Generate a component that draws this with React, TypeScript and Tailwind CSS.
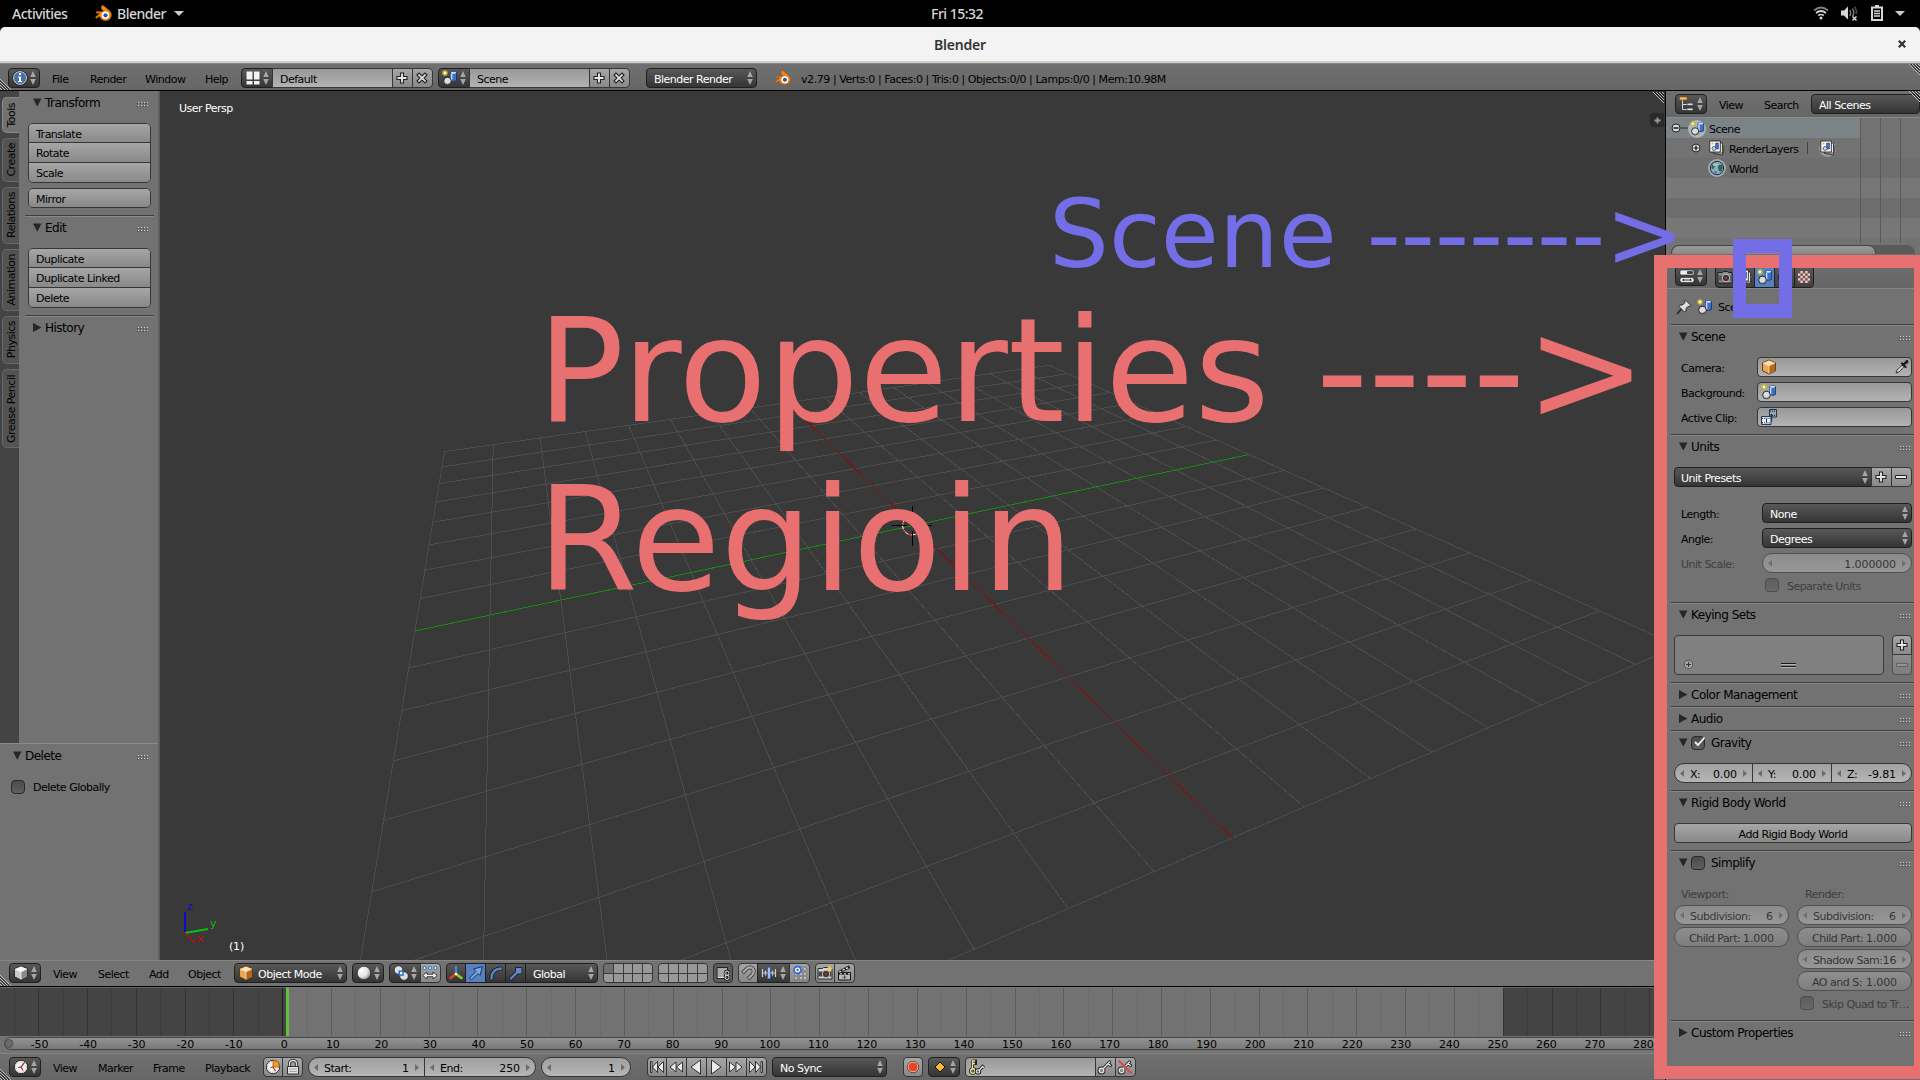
import React from "react";

type Kids = { children?: React.ReactNode };

/* ---------- shared class strings ---------- */
const DARK = "bg-gradient-to-b from-[#585858] to-[#353535] border border-[#1f1f1f] text-white";
const LIGHT = "bg-gradient-to-b from-[#a6a6a6] to-[#898989] border border-[#363636] text-black";
const FIELD = "bg-gradient-to-b from-[#999999] to-[#b3b3b3] border border-[#363636] text-black";
const NUM = "bg-gradient-to-b from-[#a0a0a0] to-[#b6b6b6] border border-[#363636] text-black";
const HEADER = "bg-gradient-to-b from-[#707070] to-[#666666]";

/* ---------- small drawings ---------- */
function UpDown({ className = "" }: { className?: string }) {
  return (
    <svg className={"shrink-0 " + className} width="6" height="14" viewBox="0 0 6 14">
      <path d="M3 0L5.8 6H.2zM3 14L5.8 8H.2z" fill="#a6a6a6" />
    </svg>
  );
}
function Tri({ open = true }: { open?: boolean }) {
  return (
    <svg className="shrink-0" width="9" height="9" viewBox="0 0 9 9">
      <path d={open ? "M0 .5H8.500L4.250 8.800z" : "M0 0L8.500 4.500L0 9z"} fill="#262626" />
    </svg>
  );
}
function Grip() {
  return (
    <svg className="shrink-0" width="11" height="5" viewBox="0 0 11 5" shapeRendering="crispEdges">
      {[0, 3, 6, 9].map((x) => (
        <g key={x}>
          <path d={`M${x} 1h1v1h-1zM${x} 4h1v1h-1z`} fill="#4a4a4a" />
          <path d={`M${x + 1} 0h1v1h-1zM${x + 1} 3h1v1h-1z`} fill="#d0d0d0" />
        </g>
      ))}
    </svg>
  );
}
function Corner({ flip = false }: { flip?: boolean }) {
  return (
    <svg width="12" height="12" viewBox="0 0 12 12" className={flip ? "rotate-180" : ""}>
      <path d="M0 1L11 12M0 4L8 12M0 7L5 12M0 10L2 12" stroke="#c4c4c4" strokeWidth="1" />
      <path d="M0 2.5L9.500 12M0 5.500L6.500 12M0 8.500L3.500 12" stroke="#111" strokeWidth="1" />
    </svg>
  );
}
function Svg({ children, s = 16 }: Kids & { s?: number }) {
  return (
    <svg className="shrink-0" width={s} height={s} viewBox="0 0 16 16" fill="none">
      {children}
    </svg>
  );
}
const Logo = ({ s = 16 }: { s?: number }) => (
  <Svg s={s}>
    <path d="M6 .8L7.800 .5L13.500 5.200Q16 7.400 15.500 10Q14.400 14.500 9.700 14.800Q5.200 14.500 4.300 10.700L1.200 12.600Q.2 12.400 .5 11.400L4.700 7.800H1.400Q.6 7 1.500 6.200H8.200L5.800 3.200z" fill="#f08518" stroke="#a04a08" strokeWidth=".5" />
    <circle cx="9.800" cy="9.700" r="3.500" fill="#fff" />
    <circle cx="9.900" cy="9.700" r="2" fill="#24579f" />
  </Svg>
);
const Plus = () => (
  <Svg>
    <path d="M6.500 3h3v3.500H13v3H9.500V13h-3V9.500H3v-3h3.500z" fill="#e6e6e6" stroke="#222" strokeWidth="1.100" />
  </Svg>
);
const Minus = ({ dim = false }: { dim?: boolean }) => (
  <Svg>
    <path d="M2.500 6.500h11v3h-11z" fill={dim ? "#b4b4b4" : "#e6e6e6"} stroke={dim ? "#555" : "#222"} />
  </Svg>
);
const Cross = () => (
  <Svg>
    <path d="M3 5L5 3L8 6L11 3L13 5L10 8L13 11L11 13L8 10L5 13L3 11L6 8z" fill="#e6e6e6" stroke="#222" strokeWidth="1.100" />
  </Svg>
);
const InfoIcon = () => (
  <Svg>
    <circle cx="8" cy="8" r="6.500" fill="#4a6fa8" stroke="#e8e8e8" strokeWidth="1" />
    <circle cx="8" cy="8" r="7.300" stroke="#151515" strokeWidth=".6" />
    <path d="M7 3h2v2H7zM6 6.500h3V11h1v1H6v-1h1V7.500H6z" fill="#fff" />
  </Svg>
);
const LayoutIcon = () => (
  <Svg>
    <path d="M1.500 1.500h6v8h-6zM1.500 11h6v3.500h-6zM9 1.500h5.500v8H9zM9 11h5.500v3.500H9z" fill="#f2f2f2" />
  </Svg>
);
const SceneShapes = () => (
  <>
    <path d="M8.500 2.600Q11.500 .6 14.500 2.600V10.500Q11.500 12.500 8.500 10.500z" fill="#3c73c8" stroke="#15315f" strokeWidth=".8" />
    <path d="M9.500 3.500v7" stroke="#c5dbff" strokeWidth="1.600" />
    <ellipse cx="11.500" cy="2.700" rx="2.600" ry="1" fill="#d4e3fa" />
    <circle cx="5.500" cy="11" r="3.800" fill="#ddd" stroke="#1a1a1a" strokeWidth=".9" />
    <path d="M2.500 12.500Q6 15.500 8.800 11.500Q8.500 14.500 5.500 14.500Q3.200 14.300 2.500 12.500" fill="#777" />
    <circle cx="3" cy="3" r="1.900" fill="#fffde0" stroke="#c9c13c" strokeWidth="1.500" />
  </>
);
const SceneIcon = ({ s = 16 }: { s?: number }) => (
  <Svg s={s}>
    <SceneShapes />
  </Svg>
);
const LayersIcon = () => (
  <Svg>
    <path d="M6 5l9 1.500L13.500 15L5 13.500z" fill="#d8d4c0" stroke="#222" strokeWidth=".8" />
    <path d="M4.500 3h9v10h-9z" fill="#e9e9e0" stroke="#222" strokeWidth=".8" />
    <path d="M.8 1h10.500v11H.8z" fill="#fff" stroke="#222" strokeWidth=".9" />
    <path d="M6.500 3h3v6h-3z" fill="#3c73c8" stroke="#15315f" strokeWidth=".5" />
    <circle cx="5" cy="8.500" r="2" fill="#ccd6e4" stroke="#15315f" strokeWidth=".7" />
    <path d="M2.500 2.500h2v2h-2z" fill="#e8b93c" />
  </Svg>
);
const WorldIcon = () => (
  <Svg>
    <circle cx="8" cy="8" r="6.700" fill="#83acd0" stroke="#1c2b3c" strokeWidth="1" />
    <path d="M2.500 5Q5 1.500 8 3L7 6L5 7L4.500 9.500L2.500 8zM9.500 5L13 4.500L14 8L12 12L10 11L9 8zM5 11L7.500 11.500L7 14z" fill="#35683a" />
    <ellipse cx="6" cy="4.500" rx="2.500" ry="1.500" fill="#fff" opacity=".6" />
  </Svg>
);
const TreeIcon = () => (
  <Svg>
    <path d="M3.500 4v9.500H8M3.500 8.500H8" stroke="#d8d8d8" strokeWidth="1" />
    <path d="M.5 1h7.500v3H.5z" fill="#f8c070" stroke="#8b4d0a" strokeWidth=".7" />
    <path d="M8 7.200h6v2H8zM8 12.300h6v2H8z" fill="#fff" stroke="#222" strokeWidth=".5" />
  </Svg>
);
const PropsIcon = () => (
  <Svg>
    <rect x="1" y="2" width="14" height="5" rx="1.500" fill="#eee" stroke="#222" strokeWidth=".6" />
    <rect x="8" y="3" width="6" height="3" rx="1" fill="#444" />
    <rect x="1" y="9.500" width="14" height="5" rx="2" fill="#eee" stroke="#222" strokeWidth=".6" />
    <path d="M5 10.500L3 12l2 1.500zM11 10.500l2 1.500l-2 1.500zM5 11.500h6v1H5z" fill="#333" />
  </Svg>
);
const CameraIcon = ({ star = false }: { star?: boolean }) => (
  <Svg>
    <path d="M1 3.500h4.500L6.500 2.500h4l1 1h3.500v10.500H1z" fill={star ? "#d4d4d4" : "#8d8d8d"} stroke="#1c1c1c" strokeWidth=".9" />
    <path d="M1.500 6.500h13v5h-13z" fill={star ? "#444" : "#5a5a5a"} />
    <circle cx="9" cy="9" r="3.700" fill="#333" stroke="#d0d0d0" strokeWidth=".9" />
    <circle cx="9" cy="9" r="1.500" fill="#9b3232" />
    {star && <path d="M12.500 0l1 2.500L16 3.500l-2.500 1l-1 2.500l-1-2.500L9 3.500l2.500-1z" fill="#f6cf3d" />}
  </Svg>
);
const TextureIcon = () => (
  <Svg>
    <path d="M2 2h12v12H2z" fill="#d9d4cf" />
    {[0, 1, 2, 3, 4].map((r) =>
      [0, 1, 2, 3, 4].map((c) =>
        (r + c) % 2 === 0 ? <rect key={`${r}${c}`} x={2 + c * 2.4} y={2 + r * 2.4} width="2.400" height="2.400" fill="#7e4540" /> : null
      )
    )}
  </Svg>
);
const PinIcon = () => (
  <Svg>
    <path d="M1 15L6 9.500" stroke="#222" strokeWidth="1.500" />
    <path d="M9.500 1L15 6.500L13.500 7.500L12.500 7L10 9.500V12L8.500 13L3 7.500L4 6H6.500L9 3.500L8.500 2z" fill="#e0e0e0" stroke="#1c1c1c" strokeWidth=".9" />
  </Svg>
);
const Cube = ({ orange = false }: { orange?: boolean }) => (
  <Svg>
    <path d="M8 1L14.500 3.800V11.800L8 15L1.500 11.800V3.800z" fill={orange ? "#eda654" : "#c9c9c9"} stroke={orange ? "#5b3208" : "#222"} strokeWidth=".9" />
    <path d="M8 1.500L14 4L8 6.800L2 4z" fill={orange ? "#fce0b4" : "#f6f6f6"} />
    <path d="M8 6.800L14 4V11.500L8 14.500z" fill={orange ? "#b06a20" : "#888"} />
    <path d="M2 4L8 6.800V14.500M8 6.800L14 4" stroke={orange ? "#fde8c8" : "#fff"} strokeWidth=".7" />
  </Svg>
);
const Dropper = () => (
  <Svg>
    <path d="M2 14L3 11L9 5.500L10.500 7L5 13z" fill="#ddd" stroke="#222" strokeWidth=".9" />
    <path d="M8 4.500L11.500 8M9 6L13 2" stroke="#1a1a1a" strokeWidth="2.200" strokeLinecap="round" />
    <path d="M10.500 4L12.500 1.500Q14.500 1 14.500 3.500L12 5.500z" fill="#222" />
  </Svg>
);
const ClipIcon = () => (
  <Svg>
    <path d="M8.500 .5H15.500V8H10.500V5L8.500 7z" fill="#8fa9bd" stroke="#182c3f" strokeWidth=".9" />
    <path d="M9 2.200h6M11 6.300h4" stroke="#182c3f" strokeDasharray="1 1" strokeWidth="1.200" />
    <path d="M10 7Q12 8 10 13" stroke="#182c3f" strokeWidth="1" />
    <path d="M.5 7.500h9.500v8H.5z" fill="#e4effa" stroke="#182c3f" strokeWidth=".9" />
    <path d="M1 9.300h9M1 13.800h9" stroke="#182c3f" strokeDasharray="1 1.200" strokeWidth="1.200" />
    <path d="M5.500 10v3.500" stroke="#182c3f" />
  </Svg>
);
const Sphere = () => (
  <Svg>
    <defs>
      <radialGradient id="ball" cx=".35" cy=".35" r=".7">
        <stop offset="0" stopColor="#fff" />
        <stop offset=".6" stopColor="#e4e4e4" />
        <stop offset="1" stopColor="#8a8a8a" />
      </radialGradient>
    </defs>
    <circle cx="8" cy="8" r="6.700" fill="url(#ball)" stroke="#222" strokeWidth=".6" />
  </Svg>
);
const PivotIcon = () => (
  <Svg>
    <circle cx="5.500" cy="5" r="4.300" fill="#e4e4e4" stroke="#222" strokeWidth=".8" />
    <circle cx="11" cy="11" r="4.300" fill="#dcdcdc" stroke="#222" strokeWidth=".8" />
    <rect x="6.200" y="6.200" width="3.800" height="3.800" fill="#fff" stroke="#2a6bd0" strokeWidth="1.500" />
  </Svg>
);
const AlignIcon = () => (
  <Svg>
    {[2.5, 8, 13.5].map((x) => (
      <circle key={x} cx={x} cy="3" r="1.500" fill="#fff" stroke="#3c73c8" strokeWidth="1.200" />
    ))}
    <path d="M.8 10.500L5 7v2.300h6V7l4.200 3.500L11 14v-2.300H5V14z" fill="#f2f2f2" stroke="#222" strokeWidth=".8" />
  </Svg>
);
const AxisIcon = () => (
  <Svg>
    <path d="M8 9V2" stroke="#4d7fe0" strokeWidth="2.400" strokeLinecap="round" />
    <path d="M8 9L2.500 13" stroke="#e8432c" strokeWidth="2.600" strokeLinecap="round" />
    <path d="M8 9L13.500 13" stroke="#8fd21c" strokeWidth="2.600" strokeLinecap="round" />
    <circle cx="8" cy="9" r="1.200" fill="#fff" />
  </Svg>
);
const ArrowIcon = () => (
  <Svg>
    <path d="M1.500 13L8 6.500L5.500 4L14.500 1.500L12 10.500L10 8.500L3.500 15z" fill="#7da7e4" stroke="#16305c" strokeWidth="1" />
  </Svg>
);
const ArcIcon = () => (
  <Svg>
    <path d="M3.500 13.500Q3.500 4 13 3.500" stroke="#15243c" strokeWidth="4" strokeLinecap="round" />
    <path d="M3.500 13.500Q3.500 4 13 3.500" stroke="#5f83bd" strokeWidth="2.300" strokeLinecap="round" />
  </Svg>
);
const ScaleIcon = () => (
  <Svg>
    <path d="M3 13.500L9 7.500" stroke="#15243c" strokeWidth="4" strokeLinecap="round" />
    <path d="M7.500 2.500H14V9H7.500z" fill="#6488c0" stroke="#15243c" />
    <path d="M3 13.500L9.500 7" stroke="#6488c0" strokeWidth="2.300" strokeLinecap="round" />
  </Svg>
);
const LockLayer = () => (
  <Svg>
    <path d="M2 2.500h10.500v11H2z" fill="#a8a8a8" stroke="#222" />
    <path d="M3 12.500h7" stroke="#e0e0e0" />
    <rect x="10" y="6" width="4" height="4.500" rx="2" stroke="#222" strokeWidth="2.400" />
    <rect x="10" y="10" width="4" height="4.500" rx="2" stroke="#222" strokeWidth="2.400" />
    <rect x="10" y="6" width="4" height="4.500" rx="2" stroke="#ddd" strokeWidth="1" />
    <rect x="10" y="10" width="4" height="4.500" rx="2" stroke="#ddd" strokeWidth="1" />
  </Svg>
);
const Magnet = () => (
  <Svg>
    <path d="M2.500 8L7 3.500Q11 1 13 4T12 10L8 14" stroke="#444" strokeWidth="4" />
    <path d="M3 7.500L7 3.500Q11 1 13 4T12 10L8.500 13.500" stroke="#a9a9a9" strokeWidth="2.200" />
  </Svg>
);
const SnapIcon = () => (
  <Svg>
    <path d="M1.500 4v8M4.500 5.500v5M11.500 5.500v5M14.500 4v8M1 8h14" stroke="#ccc" strokeWidth="1.200" />
    <path d="M8 2v12" stroke="#3d7fe0" strokeWidth="3" />
    <path d="M8 3v10" stroke="#fff" strokeWidth="1" />
  </Svg>
);
const SnapGrid = () => (
  <Svg>
    <path d="M4 8v8M9 1v15M13 1v15M2 9h14M2 13h14M9 4h7" stroke="#222" strokeWidth="2.200" />
    <path d="M4 8v8M9 1v15M13 1v15M2 9h14M2 13h14M9 4h7" stroke="#eee" strokeWidth="1" />
    <circle cx="5.500" cy="5" r="3.500" fill="#fff" stroke="#2f6fd6" strokeWidth="1.800" />
    <circle cx="5.500" cy="5" r="1.200" fill="#2f6fd6" />
  </Svg>
);
const ClapIcon = () => (
  <Svg>
    <path d="M2.500 7.500h12V15h-12z" fill="#bbb" stroke="#111" />
    <path d="M2.500 7.500h12v2.300h-12z" fill="#222" />
    <path d="M4 8.800h2M8 8.800h2M12 8.800h2" stroke="#eee" />
    <path d="M2 6.500L13 .8L14 3L3 8z" fill="#eee" stroke="#111" strokeWidth=".8" />
    <path d="M5 5l1.500 1.300M8.500 3.300L10 4.700M12 1.500l1 1.500" stroke="#111" strokeWidth="1.500" />
    <path d="M8.500 10.500v3.500M6.500 12.200h4" stroke="#555" />
  </Svg>
);
const ClockIcon = ({ pie = false }: { pie?: boolean }) => (
  <Svg>
    <circle cx="8" cy="8" r="6.700" fill="#f2f2f2" stroke="#222" strokeWidth=".9" />
    <circle cx="8" cy="8" r="5.300" stroke="#999" strokeWidth="1" strokeDasharray="1 1.800" />
    {pie && <path d="M8 8V1.300Q14.700 1.500 14.700 8z" fill="#f59b1e" stroke="#7a4a08" strokeWidth=".6" />}
    <path d={pie ? "M8 8L10.500 12M8 8L5.500 8.500" : "M8 8L11.500 3.500"} stroke={pie ? "#c22" : "#333"} strokeWidth="1.200" />
    {!pie && <path d="M8 8L5 8.500M8 8L10 11.500" stroke="#c22" strokeWidth="1.200" />}
  </Svg>
);
const Padlock = () => (
  <Svg>
    <path d="M4.500 8V5Q4.500 1.500 8 1.500T11.500 5V8" stroke="#222" strokeWidth="3" />
    <path d="M4.500 8V5Q4.500 1.500 8 1.500T11.500 5V8" stroke="#ddd" strokeWidth="1.400" />
    <path d="M2.500 7.500h11V15h-11z" fill="#e2e2e2" stroke="#222" strokeWidth=".9" />
    <path d="M4 10h8M4 12.500h8" stroke="#999" strokeWidth=".8" />
  </Svg>
);
const Transport = ({ d }: { d: string }) => (
  <Svg>
    <path d={d} fill="#ececec" stroke="#222" strokeWidth=".9" strokeLinejoin="round" />
  </Svg>
);
const Key = ({ del = false }: { del?: boolean }) => (
  <Svg>
    <path d="M5 11L12.500 3M11 4.500l2.500 2" stroke="#222" strokeWidth="3.200" strokeLinecap="round" />
    <circle cx="4.500" cy="11.500" r="2.400" stroke="#222" strokeWidth="3" />
    <path d="M5.500 10.500L12.500 3M11 4.500l2.300 2" stroke="#e4e4e4" strokeWidth="1.400" strokeLinecap="round" />
    <circle cx="4.500" cy="11.500" r="2.300" fill="#888" stroke="#e4e4e4" strokeWidth="1.300" />
    {del && <path d="M1.500 1.500L14.500 14.500" stroke="#e04848" strokeWidth="2" />}
  </Svg>
);
const KeySet = () => (
  <Svg>
    <path d="M3.500 1.500v9M3.500 2h3v2.500h-3" stroke="#222" strokeWidth="3" />
    <circle cx="3.800" cy="12" r="2.300" stroke="#222" strokeWidth="3" />
    <path d="M3.500 1.500v9M3 2h3.200M3 4.500h3" stroke="#e8e29a" strokeWidth="1.400" />
    <circle cx="3.800" cy="12" r="2.200" stroke="#e8e29a" strokeWidth="1.400" />
    <path d="M9.500 12L13.500 7.500l1.500 1.500" stroke="#222" strokeWidth="3.200" />
    <circle cx="9" cy="12.500" r="1.800" stroke="#222" strokeWidth="2.800" />
    <path d="M9.500 12L13.500 7.500l1.500 1.500" stroke="#ddd" strokeWidth="1.400" />
    <circle cx="9" cy="12.500" r="1.700" stroke="#ddd" strokeWidth="1.200" />
  </Svg>
);

/* ---------- controls ---------- */
function Txt({ children, className = "" }: Kids & { className?: string }) {
  return <span className={"whitespace-pre pt-[2px] leading-[13px] " + className}>{children}</span>;
}
function IconMenu({ children, className = "w-[32px]" }: Kids & { className?: string }) {
  return (
    <div className={"flex h-[20px] shrink-0 items-center justify-between rounded-[4px] px-[3px] " + DARK + " " + className}>
      {children}
      <UpDown />
    </div>
  );
}
function MenuText({ children, className }: Kids & { className: string }) {
  return <div className={"flex h-[20px] shrink-0 items-center " + className}><Txt>{children}</Txt></div>;
}
function Cell({ children, className }: Kids & { className: string }) {
  return <div className={"flex h-[20px] shrink-0 items-center justify-center " + className}>{children}</div>;
}
function Check({ on = false, dim = false }: { on?: boolean; dim?: boolean }) {
  return (
    <div className={"h-[14px] w-[14px] shrink-0 rounded-[4px] border border-[#2a2a2a] bg-gradient-to-b from-[#4a4a4a] to-[#606060] " + (dim ? "opacity-50" : "")}>
      {on && (
        <svg width="15" height="13" viewBox="0 0 15 13" className="-mt-px" fill="none">
          <path d="M3 6L6 9L12.500 1.500" stroke="#eee" strokeWidth="1.900" />
        </svg>
      )}
    </div>
  );
}
function LR({ right = false }: { right?: boolean }) {
  return (
    <svg className="shrink-0" width="4" height="7" viewBox="0 0 4 7">
      <path d={right ? "M0 0L4 3.500L0 7z" : "M4 0L0 3.500L4 7z"} fill="#6c6c6c" />
    </svg>
  );
}
function Num({ label = "", value, className, bare = false }: { label?: string; value: string; className: string; bare?: boolean }) {
  return (
    <div className={"flex h-[20px] shrink-0 items-center " + (bare ? "px-[14px] " : "px-[5px] ") + className}>
      {!bare && <LR />}
      <Txt className={bare ? "" : "ml-[6px]"}>{label}</Txt>
      <Txt className={"ml-auto tracking-[-0.1px] " + (bare ? "" : "mr-[6px]")}>{value}</Txt>
      {!bare && <LR right />}
    </div>
  );
}
function Title({ children, open = true, check, pad = "pl-[8px]", grip = "mr-[5px]" }: Kids & { open?: boolean; check?: "on" | "off"; pad?: string; grip?: string }) {
  return (
    <div className={"flex h-[23px] items-center " + pad}>
      <Tri open={open} />
      {check && <div className="ml-[3px]"><Check on={check === "on"} /></div>}
      <Txt className={"text-[12px] tracking-[-0.5px] " + (check ? "ml-[6px]" : "ml-[3px]")}>{children}</Txt>
      <div className={"ml-auto mt-[3px] " + grip}><Grip /></div>
    </div>
  );
}
function Panel({ children, className }: Kids & { className: string }) {
  return (
    <div className={"shrink-0 border-t border-[#3e3e3e] shadow-[inset_0_1px_0_#8a8a8a] " + className}>{children}</div>
  );
}

/* ---------- 3D viewport floor grid ---------- */
function project(u: number, v: number): [number, number] {
  const s = (v + 8) / 16;
  const t = (u + 8) / 13;
  const w = 1 + 0.31485 * s - 0.57042 * t;
  return [(445 + 934.7 * s - 285.1 * t) / w - 160.5, (451.7 + 28.6 * s - 68.6 * t) / w - 91];
}
function Floor() {
  const lines: React.ReactNode[] = [];
  for (let i = -8; i <= 8; i++) {
    if (i === 0) continue;
    const [a, b] = [project(i, -8), project(i, 8)];
    const [c, d] = [project(-8, i), project(8, i)];
    lines.push(<path key={"u" + i} d={`M${a[0]} ${a[1]}L${b[0]} ${b[1]}`} stroke="#4c4c4c" />);
    lines.push(<path key={"v" + i} d={`M${c[0]} ${c[1]}L${d[0]} ${d[1]}`} stroke="#4c4c4c" />);
  }
  const [g0, g1, r0, r1] = [project(0, -8), project(0, 8), project(-8, 0), project(8, 0)];
  return (
    <svg className="block h-full w-full" viewBox="0 0 1505 869" preserveAspectRatio="xMinYMin slice">
      <g shapeRendering="crispEdges" fill="none">
        {lines}
        <path d={`M${r0[0]} ${r0[1]}L${r1[0]} ${r1[1]}`} stroke="#7f1313" />
        <path d={`M${g0[0]} ${g0[1]}L${g1[0]} ${g1[1]}`} stroke="#148a14" />
      </g>
      <circle cx="752" cy="434.500" r="9.500" fill="none" stroke="#fff" />
      <circle cx="752" cy="434.500" r="9.500" fill="none" stroke="#f00" strokeDasharray="3.700 3.700" />
      <path d="M732 434.500h15M757 434.500h15M752.500 415v14M752.500 440v15" stroke="#000" />
      <g fontFamily="DejaVu Sans" fontSize="11">
        <path d="M25 842V821" stroke="#0a0ac8" strokeWidth="2" />
        <path d="M25 842L48 838" stroke="#0abf0a" strokeWidth="2" />
        <path d="M25 842L35 852" stroke="#c80a0a" strokeWidth="1.200" />
        <text x="27" y="819" fill="#0a0ac8">z</text>
        <text x="50" y="836" fill="#0abf0a">y</text>
        <text x="37" y="851" fill="#c80a0a">x</text>
      </g>
    </svg>
  );
}

/* ---------- timeline ---------- */
const fx = (f: number) => 282.7 + 4.882 * f;
function Timeline() {
  const marks: number[] = [];
  for (let f = -55; f <= 280; f += 5) marks.push(f);
  return (
    <svg className="block shrink-0" width="1665" height="67" viewBox="0 0 1665 67">
      <g shapeRendering="crispEdges">
        <rect width="1665" height="50" fill="#727272" />
        <rect width="287" height="50" fill="#444444" />
        <rect x="1503" width="162" height="50" fill="#444444" />
        {marks.map((f) => (
          <rect key={f} x={Math.floor(fx(f))} y="1" width="1" height="48" fill={f % 10 === 0 ? (f < 0 || f >= 250 ? "#333" : "#5c5c5c") : f < 0 || f > 250 ? "#3c3c3c" : "#6a6a6a"} />
        ))}
        <rect x="282" width="1" height="49" fill="#1c1c1c" />
        <rect x="286" width="3" height="50" fill="#60c040" />
        <rect width="1665" height="1" fill="#808080" opacity=".6" />
        <rect y="49" width="1665" height="18" fill="#747474" />
      </g>
      <rect x="4.500" y="50.500" width="1700" height="12" rx="6" fill="url(#sb)" stroke="#444" />
      <circle cx="9" cy="56.500" r="4" fill="#6a6a6a" stroke="#555" />
      <rect y="66" width="1665" height="1" fill="#858585" />
      <defs>
        <linearGradient id="sb" x1="0" y1="0" x2="0" y2="1">
          <stop offset="0" stopColor="#949494" />
          <stop offset="1" stopColor="#777" />
        </linearGradient>
      </defs>
      <g fontFamily="DejaVu Sans" fontSize="11" textAnchor="middle" fill="#000" letterSpacing="-.1">
        {marks.filter((f) => f % 10 === 0).map((f) => (
          <text key={f} x={284.3 + 4.854 * f - (f < 0 ? 2 : 0)} y="61">{f}</text>
        ))}
      </g>
    </svg>
  );
}

function Layers({ className, first = false }: { className: string; first?: boolean }) {
  return (
    <div className={"grid h-[20px] w-[50px] shrink-0 grid-cols-5 grid-rows-2 gap-px overflow-hidden rounded-[4px] border border-[#363636] bg-[#3c3c3c] " + className}>
      {Array.from({ length: 10 }, (_, i) => (
        <div key={i} className={first && i === 0 ? "bg-[#6f6f6f]" : "bg-[#999]"} />
      ))}
    </div>
  );
}
function Tab({ children, className, active = false }: Kids & { className: string; active?: boolean }) {
  return (
    <div className={"flex w-[17px] shrink-0 items-center justify-center rounded-l-[5px] border border-r-0 " + (active ? "border-[#8a8a8a] bg-[#727272] " : "border-[#686868] bg-[#535353] ") + className}>
      <span className="rotate-180 whitespace-pre leading-[13px] [writing-mode:vertical-rl]">{children}</span>
    </div>
  );
}
function Stack({ items }: { items: string[] }) {
  return (
    <div className="ml-[9px] flex w-[123px] flex-col overflow-hidden rounded-[5px] border border-[#363636]">
      {items.map((t, i) => (
        <div key={t} className={"flex items-center bg-gradient-to-b from-[#a6a6a6] to-[#898989] pl-[7px] " + (i === 0 ? "h-[18px]" : "h-[20px] border-t border-[#363636]")}>
          <Txt>{t}</Txt>
        </div>
      ))}
    </div>
  );
}
function FieldRow({ label, children, className = "" }: Kids & { label: string; className?: string }) {
  return (
    <div className={"flex h-[20px] items-center " + className}>
      <Txt className="ml-[10px] w-[76px] shrink-0">{label}</Txt>
      <div className={"flex h-[20px] w-[155px] items-center justify-between rounded-[4px] pl-[3px] pr-px " + FIELD}>{children}</div>
    </div>
  );
}

const DIMNUM = "rounded-full opacity-55 ";

function PropertiesEditor() {
  return (
    <div className="flex h-[826px] flex-col bg-[#727272]">
      <div className={"flex h-[35px] shrink-0 items-start border-b border-[#868686] pl-[9px] pt-[12px] " + HEADER}>
        <IconMenu><PropsIcon /></IconMenu>
        <div className="ml-[8px] flex overflow-hidden rounded-[4px] border border-[#1f1f1f] bg-gradient-to-b from-[#585858] to-[#404040]">
          <Cell className="h-[18px] w-[18px]"><CameraIcon /></Cell>
          <Cell className="h-[18px] w-[20px] border-l border-[#1f1f1f]"><LayersIcon /></Cell>
          <Cell className="h-[18px] w-[20px] border-l border-[#1f1f1f] bg-[#5680c2]"><SceneIcon /></Cell>
          <Cell className="h-[18px] w-[20px] border-l border-[#1f1f1f]"><WorldIcon /></Cell>
          <Cell className="h-[18px] w-[19px] border-l border-[#1f1f1f]"><TextureIcon /></Cell>
        </div>
      </div>
      <div className="flex h-[35px] shrink-0 items-center pl-[10px]">
        <PinIcon />
        <div className="ml-[5px]"><SceneIcon /></div>
        <Txt className="ml-[5px]">Scene</Txt>
      </div>
      <div className="flex flex-col pl-[5px] pr-[5px]">
        <Panel className="h-[110px]">
          <Title>Scene</Title>
          <FieldRow label="Camera:" className="mt-[9px]"><Cube orange /><Dropper /></FieldRow>
          <FieldRow label="Background:" className="mt-[5px]"><SceneIcon /></FieldRow>
          <FieldRow label="Active Clip:" className="mt-[5px]"><ClipIcon /></FieldRow>
        </Panel>
        <Panel className="h-[168px]">
          <Title>Units</Title>
          <div className="ml-[3px] mt-[9px] flex">
            <div className={"flex h-[20px] w-[198px] items-center rounded-l-[4px] pl-[6px] pr-[3px] " + DARK}>
              <Txt>Unit Presets</Txt><UpDown className="ml-auto" />
            </div>
            <Cell className={"-ml-px w-[21px] pr-px " + LIGHT}><Plus /></Cell>
            <Cell className={"-ml-px w-[21px] rounded-r-[4px] pr-px " + LIGHT}><Minus /></Cell>
          </div>
          <div className="mt-[16px] flex h-[20px] items-center">
            <Txt className="ml-[10px] w-[81px]">Length:</Txt>
            <div className={"flex h-[20px] w-[150px] items-center rounded-[4px] pl-[7px] pr-[3px] " + DARK}><Txt>None</Txt><UpDown className="ml-auto" /></div>
          </div>
          <div className="mt-[5px] flex h-[20px] items-center">
            <Txt className="ml-[10px] w-[81px]">Angle:</Txt>
            <div className={"flex h-[20px] w-[150px] items-center rounded-[4px] pl-[7px] pr-[3px] " + DARK}><Txt>Degrees</Txt><UpDown className="ml-auto" /></div>
          </div>
          <div className="mt-[5px] flex h-[20px] items-center">
            <Txt className="ml-[10px] w-[81px] text-[#3e3e3e]">Unit Scale:</Txt>
            <Num value="1.000000" className={"w-[150px] " + DIMNUM + NUM} />
          </div>
          <div className="ml-[94px] mt-[4px] flex h-[16px] items-center">
            <Check dim />
            <Txt className="ml-[8px] tracking-[-0.55px] text-[#3e3e3e]">Separate Units</Txt>
          </div>
        </Panel>
        <Panel className="h-[80px]">
          <Title>Keying Sets</Title>
          <div className="ml-[3px] mt-[9px] flex h-[40px]">
            <div className="flex w-[210px] items-end rounded-[4px] border border-[#3a3a3a] bg-[#808080] pb-[4px] pl-[8px]">
              <svg width="11" height="11" viewBox="0 0 11 11"><circle cx="5.500" cy="5.500" r="4.200" fill="#a4a4a4" stroke="#555" /><path d="M5.500 3v5M3 5.500h5" stroke="#333" /></svg>
              <svg className="ml-[87px]" width="15" height="9" viewBox="0 0 15 9" shapeRendering="crispEdges"><path d="M0 2.500h15M0 5.500h15" stroke="#1a1a1a" /><path d="M0 3.500h15M0 6.500h15" stroke="#b4b4b4" /></svg>
            </div>
            <div className="ml-[8px] flex w-[20px] flex-col">
              <Cell className={"rounded-t-[4px] " + LIGHT}><Plus /></Cell>
              <Cell className={"rounded-b-[4px] border-t-0 opacity-50 " + LIGHT}><Minus dim /></Cell>
            </div>
          </div>
        </Panel>
        <Panel className="h-[24px]"><Title open={false}>Color Management</Title></Panel>
        <Panel className="h-[24px]"><Title open={false}>Audio</Title></Panel>
        <Panel className="h-[60px]">
          <Title check="on">Gravity</Title>
          <div className="ml-[3px] mt-[9px] flex">
            <Num label="X:" value="0.00" className={"w-[79px] rounded-l-full " + NUM} />
            <Num label="Y:" value="0.00" className={"-ml-px w-[80px] " + NUM} />
            <Num label="Z:" value="-9.81" className={"-ml-px w-[81px] rounded-r-full " + NUM} />
          </div>
        </Panel>
        <Panel className="h-[60px]">
          <Title>Rigid Body World</Title>
          <Cell className={"ml-[3px] mt-[9px] w-[238px] rounded-[4px] " + LIGHT}><Txt>Add Rigid Body World</Txt></Cell>
        </Panel>
        <Panel className="h-[170px]">
          <Title check="off">Simplify</Title>
          <div className="ml-[3px] mt-[9px] flex gap-[8px] text-[#3e3e3e]">
            <div className="flex w-[115px] flex-col gap-[2px]">
              <MenuText className="pl-[7px]">Viewport:</MenuText>
              <Num label="Subdivision:" value="6" className={DIMNUM + NUM} />
              <Num bare label="Child Part:" value="1.000" className={DIMNUM + LIGHT} />
            </div>
            <div className="flex w-[115px] flex-col gap-[2px]">
              <MenuText className="pl-[8px]">Render:</MenuText>
              <Num label="Subdivision:" value="6" className={DIMNUM + NUM} />
              <Num bare label="Child Part:" value="1.000" className={DIMNUM + LIGHT} />
              <Num label="Shadow Sam:" value="16" className={DIMNUM + NUM} />
              <Num bare label="AO and S:" value="1.000" className={DIMNUM + LIGHT} />
              <div className="flex h-[20px] items-center pl-[3px]"><Check dim /><Txt className="ml-[8px]">Skip Quad to Tr…</Txt></div>
            </div>
          </div>
        </Panel>
        <Panel className="h-[60px]"><Title open={false}>Custom Properties</Title></Panel>
      </div>
    </div>
  );
}

function Outliner() {
  return (
    <div className="flex h-[163px] flex-col">
      <div className={"relative flex h-[26px] shrink-0 items-center pl-[9px] " + HEADER}>
        <IconMenu><TreeIcon /></IconMenu>
        <MenuText className="ml-[12px] w-[45px]">View</MenuText>
        <MenuText className="w-[47px]">Search</MenuText>
        <div className={"flex h-[20px] w-[120px] items-center rounded-[4px] pl-[7px] " + DARK}><Txt>All Scenes</Txt></div>
        <div className="absolute right-0 top-0"><Corner flip /></div>
      </div>
      <div className="relative flex h-[137px] flex-col overflow-hidden border-t border-[#8a8a8a] bg-[#727272]">
        <div className="flex h-[20px] shrink-0 items-center">
          <div className="flex h-full w-[194px] items-center bg-[#7c8387] pl-[5px]">
            <svg className="shrink-0" width="17" height="10" viewBox="0 0 17 10"><path d="M9 5h8" stroke="#333" /><circle cx="5" cy="5" r="4" fill="#ddd" stroke="#222" /><path d="M2.500 5h5" stroke="#111" strokeWidth="1.500" /></svg>
            <div className="-mb-px flex h-[18px] w-[18px] items-center justify-center rounded-full bg-[#b0b3b5]"><SceneIcon s={15} /></div>
            <Txt className="ml-[3px]">Scene</Txt>
          </div>
        </div>
        <div className="flex h-[20px] shrink-0 items-center pl-[25px]">
          <svg width="10" height="10" viewBox="0 0 10 10"><circle cx="5" cy="5" r="4" fill="#ddd" stroke="#222" /><path d="M2.500 5h5M5 2.500v5" stroke="#111" strokeWidth="1.200" /></svg>
          <div className="ml-[8px]"><LayersIcon /></div>
          <Txt className="ml-[4px] w-[78px]">RenderLayers</Txt>
          <div className="h-[12px] w-px bg-[#444]" />
          <div className="ml-[11px] flex h-[17px] w-[17px] items-center justify-center rounded-full bg-[#9a9a9a]"><LayersIcon /></div>
        </div>
        <div className="flex h-[20px] shrink-0 items-center bg-[#6e6e6e] pl-[42px]">
          <div className="flex h-[18px] w-[18px] items-center justify-center rounded-full bg-[#a8a8b4]"><WorldIcon /></div>
          <Txt className="ml-[3px]">World</Txt>
        </div>
        <div className="h-[20px] shrink-0 bg-[#777]" />
        <div className="h-[20px] shrink-0 bg-[#6e6e6e]" />
        <div className="h-[20px] shrink-0 bg-[#777]" />
        <div className="ml-[5px] mt-[7px] h-[16px] w-[244px] shrink-0 rounded-full bg-[#5a5a5a]">
          <div className="h-[16px] w-[205px] rounded-full border border-[#444] bg-gradient-to-b from-[#999] to-[#7c7c7c]" />
        </div>
        <div className="absolute left-[194px] top-0 flex h-[125px] w-[60px] justify-between">
          <div className="w-[20px] border-l border-[#5a5a5a]" />
          <div className="w-[20px] border-l border-[#5a5a5a]" />
          <div className="w-[20px] border-l border-[#5a5a5a]" />
        </div>
      </div>
    </div>
  );
}

const TP = [
  "M1.500 2.500h1.500v11H1.500zM8.500 2.500v11L3.500 8zM14.500 2.500v11L9 8z",
  "M8 3v10L2 8zM14.500 3v10L8.500 8z",
  "M12.500 1v14L3 8z",
  "M3.500 1v14L13 8z",
  "M8 3v10l6-5zM1.500 3v10l6-5z",
  "M14.500 2.500h-1.500v11h1.500zM7.500 2.500v11l5-5.500zM1.500 2.500v11L7 8z",
];

export default function App() {
  return (
    <div className="relative flex h-[1080px] w-[1920px] flex-col overflow-hidden bg-[#727272] text-[11px] tracking-[-0.5px] text-black [font-family:'DejaVu_Sans',sans-serif]">
      {/* desktop bar */}
      <div className="flex h-[27px] shrink-0 items-center bg-black pb-px text-[14px] font-medium text-[#d6d6d6] [font-family:'Noto_Sans',sans-serif]">
        <span className="ml-[12px] w-[83px]">Activities</span>
        <Logo s={17} />
        <span className="ml-[5px] w-[54px]">Blender</span>
        <svg className="ml-[3px]" width="10" height="5" viewBox="0 0 10 5"><path d="M0 0h10L5 5z" fill="#ccc" /></svg>
        <span className="ml-[747px] w-[69px]">Fri 15:32</span>
        <svg className="ml-auto" width="16" height="14" viewBox="0 0 16 14" fill="none" stroke="#d6d6d6" strokeWidth="1.700">
          <path d="M1 4.500Q8-1.500 15 4.500" opacity=".6" /><path d="M3 7Q8 3 13 7" /><path d="M5.200 9.500Q8 7.500 10.800 9.500" /><circle cx="8" cy="12" r="1.500" fill="#d6d6d6" stroke="none" />
        </svg>
        <svg className="ml-[11px]" width="18" height="16" viewBox="0 0 18 16" fill="none" stroke="#777" strokeWidth="1.500">
          <path d="M1 5.500h3L8 1.500v13L4 10.500H1z" fill="#d6d6d6" stroke="none" /><path d="M10 5Q11.500 8 10 11M12.500 3.500Q15 8 12.500 11" /><path d="M14.500 1.500Q17 5 16.500 9" opacity=".6" /><path d="M12.500 11.500l4 4M16.500 11.500l-4 4" stroke="#d6d6d6" />
        </svg>
        <svg className="ml-[13px]" width="12" height="16" viewBox="0 0 12 16" fill="none" stroke="#d6d6d6">
          <path d="M1 2.500h10v12.500H1z" strokeWidth="2" /><path d="M4 1h4" strokeWidth="2" /><path d="M3 6h6M3 8.500h6M3 11h6" strokeWidth="1.500" />
        </svg>
        <svg className="ml-[12px] mr-[15px]" width="10" height="5" viewBox="0 0 10 5"><path d="M0 0h10L5 5z" fill="#ccc" /></svg>
      </div>
      {/* window title */}
      <div className="h-[36px] shrink-0 bg-black">
        <div className="flex h-[36px] items-center rounded-t-[5px] border-b-2 border-[#cfcfca] bg-[#f3f3f3] text-[14px] font-semibold tracking-[-0.2px] text-[#303636] [font-family:'Noto_Sans',sans-serif]">
          <span className="ml-[934px]">Blender</span>
          <svg className="ml-auto mr-[14px]" width="8" height="8" viewBox="0 0 8 8"><path d="M.8 .8l6.400 6.400M7.200 .8L.8 7.200" stroke="#2c3232" strokeWidth="2.200" /></svg>
        </div>
      </div>
      {/* info header */}
      <div className={"relative flex h-[28px] shrink-0 items-center border-b border-black border-t border-t-[#868686] pl-[8px] pt-[2px] " + HEADER}>
        <IconMenu><InfoIcon /></IconMenu>
        <MenuText className="ml-[12px] w-[38px]">File</MenuText>
        <MenuText className="w-[55px]">Render</MenuText>
        <MenuText className="w-[60px]">Window</MenuText>
        <MenuText className="w-[36px]">Help</MenuText>
        <IconMenu className="w-[32px] rounded-r-none"><LayoutIcon /></IconMenu>
        <div className={"-ml-px flex h-[20px] w-[121px] items-center pl-[7px] " + FIELD}><Txt>Default</Txt></div>
        <Cell className={"-ml-px w-[21px] pr-px " + LIGHT}><Plus /></Cell>
        <Cell className={"-ml-px w-[21px] rounded-r-[4px] pr-px " + LIGHT}><Cross /></Cell>
        <IconMenu className="ml-[5px] w-[32px] rounded-r-none"><SceneIcon /></IconMenu>
        <div className={"-ml-px flex h-[20px] w-[121px] items-center pl-[7px] " + FIELD}><Txt>Scene</Txt></div>
        <Cell className={"-ml-px w-[21px] pr-px " + LIGHT}><Plus /></Cell>
        <Cell className={"-ml-px w-[21px] rounded-r-[4px] pr-px " + LIGHT}><Cross /></Cell>
        <div className={"ml-[16px] flex h-[20px] w-[111px] items-center rounded-[4px] pl-[7px] pr-[3px] " + DARK}><Txt>Blender Render</Txt><UpDown className="ml-auto" /></div>
        <div className="ml-[18px] w-[26px]"><Logo s={16} /></div>
        <Txt className="tracking-[-0.435px]">v2.79 | Verts:0 | Faces:0 | Tris:0 | Objects:0/0 | Lamps:0/0 | Mem:10.98M</Txt>
        <div className="absolute bottom-0 left-0"><Corner /></div>
        <div className="absolute right-0 top-0"><Corner flip /></div>
      </div>

      <div className="flex h-[989px]">
        {/* left area */}
        <div className="flex w-[1665px] shrink-0 flex-col">
          <div className="flex h-[869px] shrink-0">
            <div className="flex w-[160px] shrink-0 flex-col border-r-2 border-[#5e5e5e] bg-[#727272]">
              <div className="flex h-[652px]">
                <div className="flex w-[19px] shrink-0 flex-col items-end bg-[#444] pt-[6px]">
                  <Tab active className="h-[36px]">Tools</Tab>
                  <Tab className="mt-[5px] h-[44px]">Create</Tab>
                  <Tab className="mt-[5px] h-[57px]">Relations</Tab>
                  <Tab className="mt-[5px] h-[62px]">Animation</Tab>
                  <Tab className="mt-[5px] h-[48px]">Physics</Tab>
                  <Tab className="mt-[5px] h-[79px]">Grease Pencil</Tab>
                </div>
                <div className="flex w-[139px] flex-col">
                  <Title pad="pl-[14px]" grip="mr-[10px]">Transform</Title>
                  <div className="mt-[9px]"><Stack items={["Translate", "Rotate", "Scale"]} /></div>
                  <div className="mt-[5px]"><Stack items={["Mirror"]} /></div>
                  <Panel className="ml-[6px] mr-[4px] mt-[7px] h-[100px]">
                    <Title grip="mr-[6px]">Edit</Title>
                    <div className="-ml-[6px] mt-[9px]"><Stack items={["Duplicate", "Duplicate Linked", "Delete"]} /></div>
                  </Panel>
                  <Panel className="ml-[6px] mr-[4px]"><Title open={false} grip="mr-[6px]">History</Title></Panel>
                </div>
              </div>
              <div className="flex flex-1 flex-col border-t border-[#8a8a8a]">
                <Title pad="pl-[13px]" grip="mr-[10px]">Delete</Title>
                <div className="ml-[11px] mt-[12px] flex items-center"><Check /><Txt className="ml-[8px]">Delete Globally</Txt></div>
              </div>
            </div>
            <div className="relative min-w-0 flex-1 overflow-hidden bg-[#393939] text-white">
              <Floor />
              <Txt className="absolute left-[19px] top-[9px]">User Persp</Txt>
              <Txt className="absolute left-[69px] top-[847px] tracking-[-0.2px]">(1)</Txt>
              <div className="absolute right-[1px] top-[1px]"><Corner flip /></div>
              <div className="absolute right-px top-[22px] flex h-[14px] w-[14px] items-center justify-center rounded-l-[4px] bg-[#2a2a2a]">
                <svg width="7" height="7" viewBox="0 0 7 7"><path d="M3.500 .5v6M.5 3.500h6" stroke="#999" strokeWidth="1.800" /></svg>
              </div>
            </div>
          </div>
          {/* 3D view header */}
          <div className="relative flex h-[27px] shrink-0 items-center border-b border-t border-b-black border-t-[#868686] bg-[#727272] pb-px pl-[9px]">
            <IconMenu><Cube /></IconMenu>
            <MenuText className="ml-[12px] w-[45px]">View</MenuText>
            <MenuText className="w-[51px]">Select</MenuText>
            <MenuText className="w-[39px]">Add</MenuText>
            <MenuText className="w-[46px]">Object</MenuText>
            <div className={"flex h-[20px] w-[113px] items-center rounded-[4px] pl-[3px] pr-[3px] " + DARK}><Cube orange /><Txt className="ml-[4px]">Object Mode</Txt><UpDown className="ml-auto" /></div>
            <IconMenu className="ml-[5px] w-[32px]"><Sphere /></IconMenu>
            <IconMenu className="ml-[5px] w-[32px] rounded-r-none"><PivotIcon /></IconMenu>
            <Cell className={"-ml-px w-[21px] rounded-r-[4px] pr-px " + LIGHT}><AlignIcon /></Cell>
            <Cell className={"ml-[5px] w-[20px] rounded-l-[4px] " + DARK}><AxisIcon /></Cell>
            <Cell className="-ml-px w-[21px] border border-[#1f1f1f] bg-[#5680c2]"><ArrowIcon /></Cell>
            <Cell className={"-ml-px w-[21px] " + DARK}><ArcIcon /></Cell>
            <Cell className={"-ml-px w-[21px] " + DARK}><ScaleIcon /></Cell>
            <div className={"-ml-px flex h-[20px] w-[73px] items-center rounded-r-[4px] pl-[7px] pr-[3px] " + DARK}><Txt>Global</Txt><UpDown className="ml-auto" /></div>
            <Layers first className="ml-[5px]" />
            <Layers className="ml-[5px]" />
            <Cell className={"ml-[5px] w-[20px] rounded-[4px] border border-[#2c2c2c] bg-[#5c5c5c]"}><LockLayer /></Cell>
            <Cell className={"ml-[5px] w-[20px] rounded-l-[4px] " + LIGHT}><Magnet /></Cell>
            <IconMenu className="-ml-px w-[33px] rounded-none"><SnapIcon /></IconMenu>
            <Cell className={"-ml-px w-[21px] rounded-r-[4px] " + LIGHT}><SnapGrid /></Cell>
            <Cell className={"ml-[5px] w-[20px] rounded-l-[4px] " + LIGHT}><CameraIcon star /></Cell>
            <Cell className={"-ml-px w-[21px] rounded-r-[4px] pr-px " + LIGHT}><ClapIcon /></Cell>
            <div className="absolute bottom-0 left-0"><Corner /></div>
          </div>
          <Timeline />
          {/* timeline header */}
          <div className={"relative flex h-[26px] shrink-0 items-center pl-[9px] " + HEADER}>
            <IconMenu><ClockIcon /></IconMenu>
            <MenuText className="ml-[12px] w-[45px]">View</MenuText>
            <MenuText className="w-[55px]">Marker</MenuText>
            <MenuText className="w-[52px]">Frame</MenuText>
            <MenuText className="w-[58px]">Playback</MenuText>
            <Cell className={"w-[20px] rounded-l-[4px] " + LIGHT}><ClockIcon pie /></Cell>
            <Cell className={"-ml-px w-[21px] rounded-r-[4px] " + LIGHT}><Padlock /></Cell>
            <Num label="Start:" value="1" className={"ml-[5px] w-[117px] rounded-l-full " + NUM} />
            <Num label="End:" value="250" className={"-ml-px w-[112px] rounded-r-full " + NUM} />
            <Num value="1" className={"ml-[5px] w-[90px] rounded-full " + NUM} />
            <div className="ml-[16px] flex">
              {TP.map((d, i) => (
                <Cell key={i} className={(i === 0 ? "w-[20px] rounded-l-[4px] " : "-ml-px w-[21px] pr-px ") + (i === 5 ? "rounded-r-[4px] " : "") + LIGHT}><Transport d={d} /></Cell>
              ))}
            </div>
            <div className={"ml-[5px] flex h-[20px] w-[115px] items-center rounded-[4px] pl-[7px] pr-[3px] " + DARK}><Txt>No Sync</Txt><UpDown className="ml-auto" /></div>
            <Cell className={"ml-[16px] w-[20px] rounded-[4px] " + LIGHT}><Svg><circle cx="8" cy="8" r="5" fill="#e8441c" stroke="#eee" strokeWidth=".8" /><circle cx="8" cy="8" r="5.700" stroke="#6b1a08" strokeWidth=".7" /></Svg></Cell>
            <IconMenu className="ml-[5px] w-[32px]"><Svg><path d="M8 3l5 5l-5 5l-5-5z" fill="#f9b82c" stroke="#141414" /></Svg></IconMenu>
            <div className={"ml-[5px] flex h-[20px] w-[131px] items-center rounded-l-[4px] pl-[3px] " + FIELD}><KeySet /></div>
            <Cell className={"-ml-px w-[21px] pr-px " + LIGHT}><Key /></Cell>
            <Cell className={"-ml-px w-[21px] rounded-r-[4px] pr-px " + LIGHT}><Key del /></Cell>
            <div className="absolute bottom-0 left-0"><Corner /></div>
          </div>
        </div>
        {/* right area */}
        <div className="flex w-[255px] flex-col border-l border-black">
          <Outliner />
          <PropertiesEditor />
        </div>
      </div>

      {/* annotations */}
      <div className="absolute left-[1654px] top-[255px] h-[824px] w-[273px] border-[13px] border-[#e87070]" />
      <div className="absolute left-[1733px] top-[239px] h-[79px] w-[59px] border-[13px] border-y-[14px] border-[#746ee6]" />
      <div className="absolute left-[537px] top-[286px] whitespace-pre text-[145px] leading-[169px] tracking-normal text-[#e87070]">{"Properties ---->\nRegioin"}</div>
      <div className="absolute left-[1049px] top-[179px] whitespace-pre text-[94.400px] leading-[110px] tracking-normal text-[#746ee6]">{"Scene ------->"}</div>
    </div>
  );
}
